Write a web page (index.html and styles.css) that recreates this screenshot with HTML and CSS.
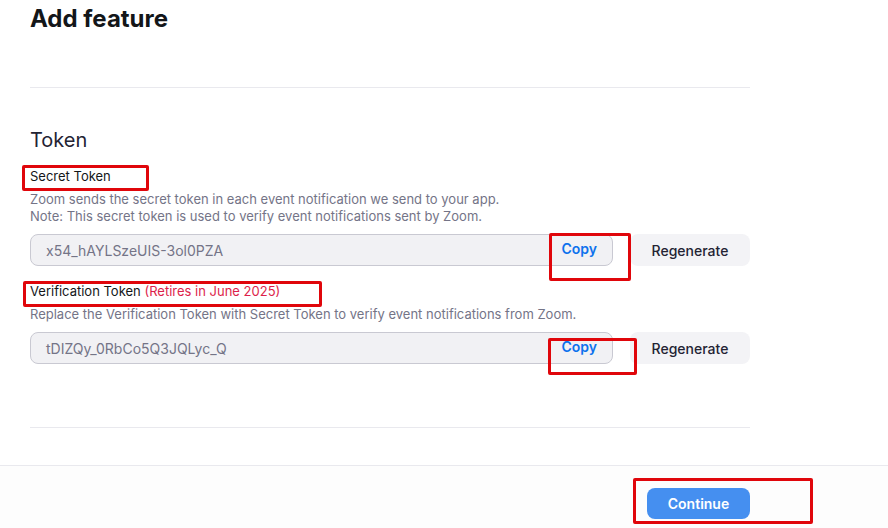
FILE: index.html
```html
<!DOCTYPE html>
<html>
<head>
<meta charset="utf-8">
<link rel="stylesheet" href="styles.css">
</head>
<body>
<div class="screen">
  <main class="page">
    <h1 class="title">Add feature</h1>
    <hr class="divider first">
    <h2 class="section">Token</h2>

    <div class="field">
      <div class="label">Secret Token</div>
      <p class="desc">Zoom sends the secret token in each event notification we send to your app.<br>Note: This secret token is used to verify event notifications sent by Zoom.</p>
      <div class="row">
        <div class="input">
          <span class="value">x54_hAYLSzeUIS-3ol0PZA</span>
          <span class="copy">Copy</span>
        </div>
        <button class="regen">Regenerate</button>
      </div>
    </div>

    <div class="field second">
      <div class="label">Verification Token <span class="retire">(Retires in June 2025)</span></div>
      <p class="desc tight">Replace the Verification Token with Secret Token to verify event notifications from Zoom.</p>
      <div class="row">
        <div class="input">
          <span class="value">tDIZQy_0RbCo5Q3JQLyc_Q</span>
          <span class="copy">Copy</span>
        </div>
        <button class="regen">Regenerate</button>
      </div>
    </div>

    <hr class="divider last">
  </main>

  <footer class="footer">
    <button class="continue">Continue</button>
  </footer>

  <div class="mark m-secret"></div>
  <div class="mark m-copy1"></div>
  <div class="mark m-verif"></div>
  <div class="mark m-copy2"></div>
  <div class="mark m-continue"></div>
</div>
</body>
</html>
```

FILE: styles.css
```css
* { box-sizing: border-box; }
html, body { margin: 0; padding: 0; background: #ffffff; }
body {
  font-family: Inter, "Noto Sans", sans-serif;
  color: #232333;
  width: 888px;
  height: 528px;
  overflow: hidden;
}
.screen { position: relative; width: 888px; height: 528px; }

.page {
  width: 750px;
  padding-left: 30px;
}
.title {
  margin: 0;
  padding-top: 4px;
  font-size: 24px;
  line-height: 29px;
  font-weight: 700;
  color: #131619;
}
.divider {
  margin: 0;
  border: 0;
  height: 1px;
  background: #e9e9ee;
}
.divider.first { margin-top: 54px; }
.divider.last { margin-top: 63px; }

.section {
  margin: 40px 0 0;
  font-size: 20px;
  line-height: 24px;
  font-weight: 400;
  color: #232333;
}

.field { margin-top: 16px; }
.field.second { margin-top: 17px; }
.label {
  font-size: 13px;
  line-height: 17px;
  font-weight: 400;
  color: #131619;
}
.retire { color: #dd1f4b; }
.desc {
  margin: 6px 0 0;
  font-size: 13px;
  line-height: 17px;
  color: #747487;
}
.desc.tight { margin-top: 6px; }

.row {
  display: flex;
  gap: 17px;
  margin-top: 9px;
}
.field.second .row { margin-top: 9px; }

.input {
  width: 583px;
  height: 32px;
  display: flex;
  align-items: center;
  justify-content: space-between;
  padding: 0 15px 0 15px;
  background: #f1f1f4;
  border: 1px solid #c9c9d2;
  border-radius: 8px;
}
.value {
  font-size: 14px;
  color: #747487;
}
.copy {
  font-size: 14px;
  font-weight: 600;
  color: #0e72ed;
  margin-top: -3px;
}
.regen {
  width: 120px;
  height: 32px;
  border: 0;
  border-radius: 8px;
  background: #f3f3f6;
  font-family: inherit;
  font-size: 14px;
  font-weight: 500;
  color: #232333;
  padding: 0;
}

.footer {
  margin-top: 37px;
  border-top: 1px solid #e9e9ee;
  background: #fdfdfd;
  height: 63px;
  padding: 22px 0 0 647px;
}
.continue {
  width: 103px;
  height: 31px;
  border: 0;
  border-radius: 8px;
  background: #458ff0;
  color: #ffffff;
  font-family: inherit;
  font-size: 14px;
  font-weight: 600;
  padding: 0;
}

.mark {
  position: absolute;
  border: 3px solid #e0060b;
  border-radius: 2px;
  pointer-events: none;
}
.m-secret { left: 22px; top: 165px; width: 127px; height: 26px; }
.m-copy1 { left: 549px; top: 233px; width: 82px; height: 48px; }
.m-verif { left: 23px; top: 281px; width: 299px; height: 26px; }
.m-copy2 { left: 548px; top: 338px; width: 89px; height: 37px; }
.m-continue { left: 633px; top: 478px; width: 180px; height: 46px; }
```
